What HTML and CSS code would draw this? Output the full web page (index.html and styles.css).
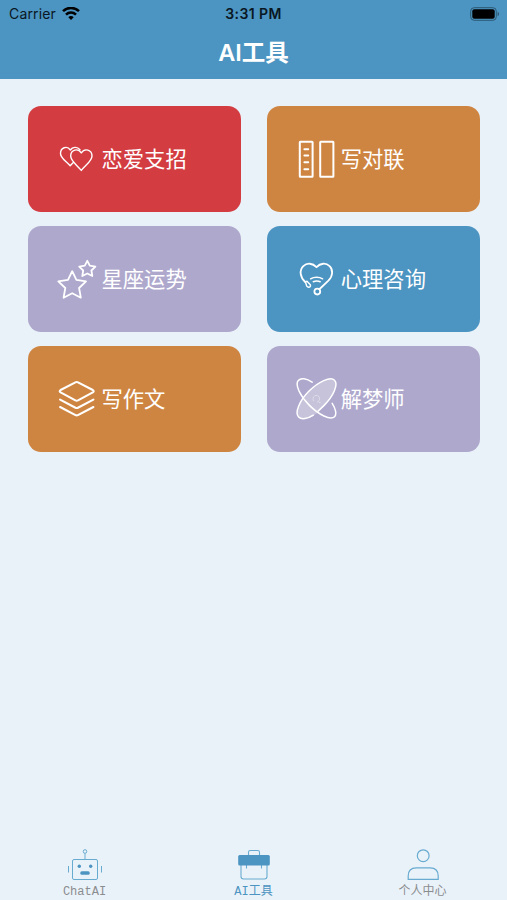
FILE: index.html
```html
<!DOCTYPE html>
<html lang="zh-CN">
<head>
  <meta charset="UTF-8" />
  <meta name="viewport" content="width=device-width, initial-scale=1.0"/>
  <title>AI工具</title>
  <link rel="stylesheet" href="styles.css">
</head>
<body>

<header>
  <div class="status-bar">
    <div class="carrier">
      <span>Carrier</span>
      <svg width="18" height="14" viewBox="0 0 18 14" fill="none" stroke="#000" stroke-width="2.5">
        <path d="M1 4.2C5.4 -.2 12.6 -.2 17 4.2"/>
        <path d="M4 7.7c2.8-2.8 7.2-2.8 10 0"/>
        <path d="M6.3 10.2c1.5-1.5 3.9-1.5 5.4 0L9 13z" fill="#000" stroke="none"/>
      </svg>
    </div>
    <span class="time">3:31 PM</span>
    <svg class="battery" width="30" height="14" viewBox="0 0 30 14">
      <rect x=".7" y=".7" width="25.6" height="12.6" rx="3.5" fill="none" stroke="#2c5873"/>
      <rect x="2.3" y="2.3" width="22.4" height="9.4" rx="2" fill="#000"/>
      <path d="M27.6 4.8c2 .8 2 3.6 0 4.4z" fill="#2c5873"/>
    </svg>
  </div>
  <h1>AI工具</h1>
</header>

<main class="tools">
  <div class="card red">
    <svg class="icon" viewBox="0 0 42 42" stroke-width="1.4">
      <path d="M25.3 14.9C22 9.7 14.7 11.6 14.7 18C14.7 23 20.5 26.5 25.3 32.4C30.1 26.5 36 23 36 18C36 11.6 28.6 9.7 25.3 14.9Z"/>
      <path d="M24 11.7C21 8.2 16.4 9 14.4 12C11 7.3 4.5 9.5 4.5 15.5C4.5 20.3 9.5 22.5 14.2 27.7L17.3 24.5"/>
    </svg>
    <span>恋爱支招</span>
  </div>

  <div class="card orange">
    <svg class="icon" viewBox="0 0 42 42" stroke-width="2">
      <rect x="4.8" y="3.7" width="12.8" height="35" rx=".5"/>
      <rect x="25.2" y="3.7" width="13.2" height="35" rx=".5"/>
      <path d="M9.4 11.2h3.8M9.4 17.6h3.8M9.4 24.2h3.8M9.4 31.2h3.8"/>
    </svg>
    <span>写对联</span>
  </div>

  <div class="card purple">
    <svg class="icon" viewBox="0 0 42 42" stroke-width="1.8">
      <path d="M16.2 13.2L20.4 21.9L30 23.3L23.1 30L24.8 39.7L16.2 35.2L7.6 39.7L9.3 30L2.3 23.3L12 21.9Z"/>
      <path d="M31.3 2.8L33.8 7.7L39.4 8.6L35.4 12.5L36.3 18L31.3 15.5L26.3 18L27.2 12.5L23.2 8.6L28.8 7.7Z"/>
    </svg>
    <span>星座运势</span>
  </div>

  <div class="card blue">
    <svg class="icon" viewBox="0 0 42 42" stroke-width="1.8">
      <path d="M24.6 31L33.4 22.7C38.1 18 38.2 11.7 34.6 8.2C30.9 4.5 25.4 5 21.5 9.2C17.6 5 12.1 4.5 8.3 8.2C4 12.5 5.1 19.3 10.2 24"/>
      <circle cx="22.3" cy="33.6" r="2.9"/>
      <path d="M10.5 24.2L12 23.2L15.3 26.7C16.2 29 13.2 30.2 11.8 28.2Z" stroke-width="1.4"/>
      <path d="M15.6 20.8C18.9 18.7 24.3 18.7 27.6 20.8M18.3 23.8Q21.7 22.2 25.2 23.8" stroke-width="1.5"/>
    </svg>
    <span>心理咨询</span>
  </div>

  <div class="card orange">
    <svg class="icon" viewBox="0 0 42 42" stroke-width="2.1">
      <path d="M19.4 4.4Q20.7 3.7 22 4.4L36.8 12Q38.6 13.2 36.8 14.4L22 22.4Q20.7 23.1 19.4 22.4L4.6 14.4Q2.8 13.2 4.6 12Z"/>
      <path d="M4.1 21.6L19.5 29.7Q20.7 30.3 21.9 29.7L37.4 21.6M4.1 29L19.5 37.1Q20.7 37.7 21.9 37.1L37.4 29"/>
    </svg>
    <span>写作文</span>
  </div>

  <div class="card purple">
    <svg class="icon" viewBox="0 0 42 42" stroke-width="1.5">
      <path d="M18.3 38C12.8 41 7.3 41.6 4 39.3C-.4 35.2 3.5 23.7 12.6 14.4C22.5 4.1 34.5-2.3 39.4 2.3C43.6 6.9 37.8 19 28.7 28.3C25.2 31.9 21.7 35.6 18.3 38Z" fill="#c6c3da" stroke="none"/>
      <path d="M18.3 37.2C12.8 40.8 6.5 42 3.6 39C-.7 34.6 4.8 22.4 13.8 13.3C23.4 3.7 35.6-1.9 39.5 2.2C43.7 6.6 38.2 18.3 29.1 27.4L23.1 33.1"/>
      <path d="M17.1 4.2C11.6.4 5.9-.4 3.3 2.5C-.4 6.7 5.2 18 14.2 27.1C23.8 36.7 35.4 42.7 39.5 38.8C41.9 36.5 40.7 30.7 37.2 25.3"/>
      <path d="M18.4 22.7C16.9 19.8 19.5 16.6 22.6 17.6C25.5 18.7 25.3 22.8 22.4 24M24.4 24.5h.8" stroke="#e6e3ef" stroke-width=".8" stroke-dasharray="2 1"/>
    </svg>
    <span>解梦师</span>
  </div>
</main>

<nav class="tab-bar">
  <div class="tab">
    <svg width="36" height="34" viewBox="0 0 36 34" stroke-width="1">
      <circle cx="18" cy="4.5" r="1.8"/>
      <path d="M18 6.5v6"/>
      <rect x="5.5" y="12.5" width="25" height="20" rx="1.5"/>
      <path d="M1.5 19v6.5M34.5 19v6.5"/>
      <circle class="solid" cx="12.3" cy="19.2" r="1.7"/>
      <circle class="solid" cx="23.7" cy="19.2" r="1.7"/>
      <rect class="solid" x="13.3" y="24.2" width="9.4" height="3.5" rx="1.5"/>
    </svg>
    <span>ChatAI</span>
  </div>
  <div class="tab active">
    <svg width="36" height="34" viewBox="0 0 36 34" stroke-width="1.1">
      <path d="M12.5 8V5.2q0-1.7 1.7-1.7h7.6q1.7 0 1.7 1.7V8"/>
      <path d="M5 18v11.5q0 2.5 2.5 2.5h21q2.5 0 2.5-2.5V18M10.5 18v3.5M25.5 18v3.5"/>
      <rect class="solid" x="2.2" y="8" width="31.6" height="10.4" rx="1.5"/>
    </svg>
    <span>AI工具</span>
  </div>
  <div class="tab">
    <svg width="36" height="34" viewBox="0 0 36 34" stroke-width="1.2">
      <circle cx="18.2" cy="8.7" r="5.9"/>
      <path d="M3.2 32.4V29q0-8.2 8-8.2h14q8 0 8 8.2v3.4z"/>
    </svg>
    <span>个人中心</span>
  </div>
</nav>

</body>
</html>
```
FILE: styles.css
```css
* {
  box-sizing: border-box;
}

body {
  font-family: Inter, "Noto Sans CJK SC", sans-serif;
  margin: 0;
  min-height: 900px;
  background: #eaf2f9;
  display: flex;
  flex-direction: column;
}

header {
  height: 79px;
  background-color: #4c94c1;
}

.status-bar {
  height: 27px;
  padding: 0 7px 0 9px;
  display: grid;
  grid-template-columns: 1fr auto 1fr;
  align-items: center;
  font-size: 14px;
  color: #091723;
}

.carrier {
  display: flex;
  align-items: center;
  gap: 6px;
  letter-spacing: 0.15px;
}

.time {
  font-weight: 600;
  letter-spacing: 0.4px;
  margin-right: 2px;
}

.battery {
  justify-self: end;
}

h1 {
  margin: 0;
  font-size: 23.5px;
  font-weight: 600;
  line-height: 52px;
  text-align: center;
  color: white;
}

.tools {
  flex: 1;
  display: grid;
  grid-template-columns: 1fr 1fr;
  grid-auto-rows: 106px;
  gap: 13.8px 26.5px;
  padding: 27px 27px 0 28px;
}

.card {
  display: flex;
  align-items: center;
  gap: 3.5px;
  padding-left: 28px;
  border-radius: 13px;
  font-size: 21.3px;
  line-height: 32px;
  color: white;
}

.red {
  background-color: #d33d42;
}

.orange {
  background-color: #cf8542;
}

.purple {
  background-color: #aea8cd;
}

.blue {
  background-color: #4c94c1;
}

.icon {
  width: 42px;
  height: 42px;
  fill: none;
  stroke: white;
  stroke-linecap: round;
  stroke-linejoin: round;
}

.tab-bar {
  display: flex;
  height: 53px;
}

.tab {
  flex: 1;
  display: flex;
  flex-direction: column;
  align-items: center;
  gap: 3px;
  font-family: "Liberation Mono", "Noto Sans CJK SC", monospace;
  font-size: 12px;
  line-height: 16px;
  color: #8a8d90;
}

.tab svg {
  flex-shrink: 0;
  fill: none;
  stroke: #68abd0;
}

.tab .solid {
  fill: #4c94c1;
  stroke: none;
}

.active {
  color: #4c94c1;
}
```
